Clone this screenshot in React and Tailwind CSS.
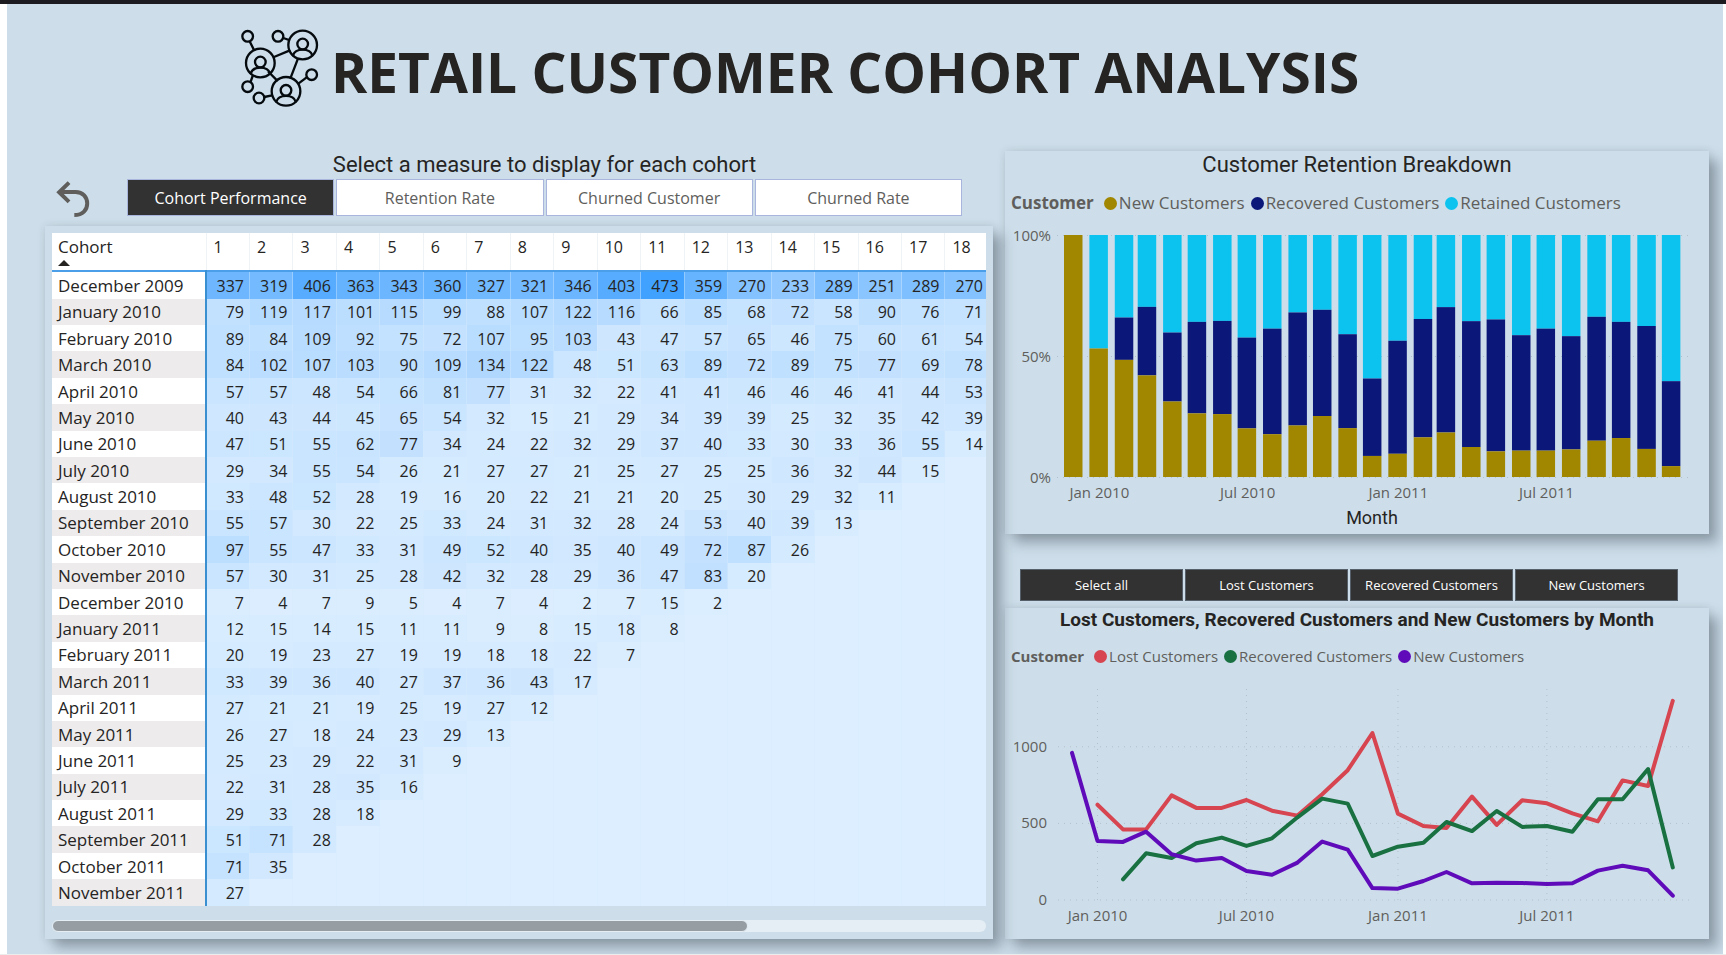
import { useState } from "react";

const COHORTS = [
  ["December 2009", [337, 319, 406, 363, 343, 360, 327, 321, 346, 403, 473, 359, 270, 233, 289, 251, 289, 270]],
  ["January 2010", [79, 119, 117, 101, 115, 99, 88, 107, 122, 116, 66, 85, 68, 72, 58, 90, 76, 71]],
  ["February 2010", [89, 84, 109, 92, 75, 72, 107, 95, 103, 43, 47, 57, 65, 46, 75, 60, 61, 54]],
  ["March 2010", [84, 102, 107, 103, 90, 109, 134, 122, 48, 51, 63, 89, 72, 89, 75, 77, 69, 78]],
  ["April 2010", [57, 57, 48, 54, 66, 81, 77, 31, 32, 22, 41, 41, 46, 46, 46, 41, 44, 53]],
  ["May 2010", [40, 43, 44, 45, 65, 54, 32, 15, 21, 29, 34, 39, 39, 25, 32, 35, 42, 39]],
  ["June 2010", [47, 51, 55, 62, 77, 34, 24, 22, 32, 29, 37, 40, 33, 30, 33, 36, 55, 14]],
  ["July 2010", [29, 34, 55, 54, 26, 21, 27, 27, 21, 25, 27, 25, 25, 36, 32, 44, 15]],
  ["August 2010", [33, 48, 52, 28, 19, 16, 20, 22, 21, 21, 20, 25, 30, 29, 32, 11]],
  ["September 2010", [55, 57, 30, 22, 25, 33, 24, 31, 32, 28, 24, 53, 40, 39, 13]],
  ["October 2010", [97, 55, 47, 33, 31, 49, 52, 40, 35, 40, 49, 72, 87, 26]],
  ["November 2010", [57, 30, 31, 25, 28, 42, 32, 28, 29, 36, 47, 83, 20]],
  ["December 2010", [7, 4, 7, 9, 5, 4, 7, 4, 2, 7, 15, 2]],
  ["January 2011", [12, 15, 14, 15, 11, 11, 9, 8, 15, 18, 8]],
  ["February 2011", [20, 19, 23, 27, 19, 19, 18, 18, 22, 7]],
  ["March 2011", [33, 39, 36, 40, 27, 37, 36, 43, 17]],
  ["April 2011", [27, 21, 21, 19, 25, 19, 27, 12]],
  ["May 2011", [26, 27, 18, 24, 23, 29, 13]],
  ["June 2011", [25, 23, 29, 22, 31, 9]],
  ["July 2011", [22, 31, 28, 35, 16]],
  ["August 2011", [29, 33, 28, 18]],
  ["September 2011", [51, 71, 28]],
  ["October 2011", [71, 35]],
  ["November 2011", [27]],
];

const PERIODS = Array.from({ length: 18 }, (_, i) => i + 1);
const MEASURES = ["Cohort Performance", "Retention Rate", "Churned Customer", "Churned Rate"];
const SERIES_BUTTONS = ["Select all", "Lost Customers", "Recovered Customers", "New Customers"];

// Per month: [top of New, top of Recovered] in percent of all customers.
const BREAKDOWN = [
  [100, 100], [53.1, 53.1], [48.4, 65.9], [42, 70.3], [31.2, 59.7], [26.3, 64.1], [26, 64.5],
  [20.1, 57.6], [17.7, 61.3], [21.3, 68], [25.2, 69.1], [20.2, 59], [8.7, 40.7], [9.6, 56.3],
  [16.4, 65.3], [18.4, 70.2], [12.4, 64.4], [10.6, 65.1], [10.9, 58.6], [10.9, 61.3],
  [11.4, 58.2], [15, 66.2], [16.1, 64.1], [11.6, 62.4], [4.5, 39.6],
];

const LOST = [622, 461, 461, 683, 601, 601, 653, 583, 551, 690, 847, 1090, 564, 483, 470, 675, 490, 651, 631, 566, 514, 781, 744, 1300];
const RECOVERED = [135, 305, 274, 370, 407, 353, 403, 540, 662, 629, 287, 348, 374, 509, 450, 581, 477, 483, 446, 657, 657, 855, 213];
const NEW = [960, 385, 379, 446, 298, 257, 274, 189, 165, 244, 381, 329, 78, 74, 124, 183, 109, 113, 111, 104, 109, 192, 224, 194, 28];

const TICKS = [[1, "Jan 2010"], [7, "Jul 2010"], [13, "Jan 2011"], [19, "Jul 2011"]];

// Days from 1 December 2009 to the first day of the n-th month after it.
const dayOf = (n) => (Date.UTC(2009, 11 + n, 1) - Date.UTC(2009, 11, 1)) / 86400000;

function heat(value) {
  const t = (value || 0) / 473;
  return `rgb(${Math.round(220 - 155 * t)}, ${Math.round(238 - 77 * t)}, 255)`;
}

function NetworkIcon() {
  return (
    <svg viewBox="60 55 240 240" className="size-20 shrink-0" fill="none" stroke="#050a0e" strokeWidth="7" strokeLinecap="round" aria-hidden="true">
      <circle cx="83" cy="80" r="16" />
      <circle cx="174" cy="80" r="16" />
      <circle cx="83" cy="231" r="16" />
      <circle cx="117" cy="265" r="16" />
      <circle cx="275" cy="195" r="16" />
      {[[248, 106], [121, 160], [198, 245]].map(([x, y]) => (
        <g key={x}>
          <circle cx={x} cy={y} r="43" />
          <circle cx={x} cy={y - 3} r="16" />
          <path d={`M${x - 29} ${y + 31} C${x - 22} ${y + 8} ${x + 22} ${y + 8} ${x + 29} ${y + 31}`} />
        </g>
      ))}
      <path d="M90 97 102 121M190 85 207 91M162 142 208 123M233 149 212 204M146 187 171 212M98 199 92 216M133 262 156 257M236 221 260 203" />
    </svg>
  );
}

function UndoIcon() {
  return (
    <svg viewBox="168 120 105 115" className="h-[38px] w-[35px]" fill="none" stroke="#605e5c" strokeWidth="12" aria-hidden="true">
      <path d="M207 128 177 157 207 186M177 156H227C249 156 262 172 262 191S249 226 223 226" />
    </svg>
  );
}

function Legend({ items, className }) {
  return (
    <div className={`flex items-center pl-[6px] text-[#605e5c] ${className}`}>
      <span className="mr-[10px] font-bold">Customer</span>
      <ul className="flex gap-[6px]">
        {items.map(([label, dot]) => (
          <li key={label} className="flex items-center gap-[2px]">
            <span className={`size-[13px] rounded-full ${dot}`} />
            {label}
          </li>
        ))}
      </ul>
    </div>
  );
}

function CohortTable() {
  return (
    <div className="overflow-hidden">
      <table className="h-[673px] w-[calc(100%+3px)] table-fixed border-collapse text-base leading-5 text-[#252423]">
        <thead>
          <tr className="h-[38px] border-b-2 border-[#4a9fe8] bg-white align-top">
            <th scope="col" className="w-[154px] border-r border-[#f0f3f5] pt-1 pl-[6px] text-left text-[17px] font-normal">
              Cohort
              <span className="mt-[3px] block h-0 w-0 border-x-[6px] border-b-[6px] border-x-transparent border-b-[#252423]" />
            </th>
            {PERIODS.map((p) => (
              <th key={p} scope="col" className="border-r border-[#f0f3f5] pt-1 pl-[7px] text-left font-normal">
                {p}
              </th>
            ))}
          </tr>
        </thead>
        <tbody>
          {COHORTS.map(([name, values]) => (
            <tr key={name} className="group">
              <th scope="row" className="border-r-2 border-[#3a8fd0] bg-white pt-px pl-[6px] text-left text-[17px] font-normal whitespace-nowrap group-even:bg-[#edebec]">
                {name}
              </th>
              {PERIODS.map((p, i) => (
                <td key={p} className="border-r border-[#d7eafc]/40 pt-px pr-[5px] text-right" style={{ backgroundColor: heat(values[i]) }}>
                  {values[i]}
                </td>
              ))}
            </tr>
          ))}
        </tbody>
      </table>
    </div>
  );
}

function RetentionChart() {
  const x = (n) => 59 + dayOf(n) * 0.819;
  const y = (pct) => 252 - pct * 2.42;
  return (
    <svg viewBox="0 0 704 309" className="block w-full font-['Open_Sans',sans-serif]" role="img" aria-label="Customer Retention Breakdown">
      <g stroke="#b3c1cc" strokeDasharray="1 5">
        <path d="M52 10.5H684M52 131.5H684M52 252.5H684" />
      </g>
      {BREAKDOWN.map(([a, b], n) => (
        <g key={n}>
          {b < 100 && <rect x={x(n)} y={y(100)} width="18.5" height={y(b) - y(100)} fill="#0cc3ef" />}
          {a < b && <rect x={x(n)} y={y(b)} width="18.5" height={y(a) - y(b)} fill="#0c1879" />}
          <rect x={x(n)} y={y(a)} width="18.5" height={y(0) - y(a)} fill="#a18600" />
        </g>
      ))}
      <g fill="#605e5c" fontSize="15">
        <g textAnchor="end">
          <text x="46" y="16">100%</text>
          <text x="46" y="137">50%</text>
          <text x="46" y="258">0%</text>
        </g>
        <g textAnchor="middle">
          {TICKS.map(([n, label]) => (
            <text key={label} x={x(n) + 10} y="273">{label}</text>
          ))}
        </g>
      </g>
      <text x="367" y="299" textAnchor="middle" fontSize="18" fill="#252423" className="font-['Roboto',sans-serif]">Month</text>
    </svg>
  );
}

function TrendChart() {
  const x = (n) => 67 + dayOf(n) * 0.823;
  const y = (v) => 227 - v * 0.1532;
  const line = (values, start) => values.map((v, i) => `${x(i + start).toFixed(1)},${y(v).toFixed(1)}`).join(" ");
  return (
    <svg viewBox="0 0 704 266" className="block w-full font-['Open_Sans',sans-serif]" role="img" aria-label="Lost, recovered and new customers by month">
      <g stroke="#b3c1cc" strokeDasharray="1 5">
        {[0, 500, 1000].map((v) => (
          <path key={v} d={`M53 ${y(v)}H684`} />
        ))}
        {TICKS.map(([n]) => (
          <path key={n} d={`M${x(n)} 16V227`} />
        ))}
      </g>
      <g fill="none" strokeWidth="4" strokeLinejoin="round" strokeLinecap="round">
        <polyline points={line(LOST, 1)} stroke="#d64550" />
        <polyline points={line(RECOVERED, 2)} stroke="#197142" />
        <polyline points={line(NEW, 0)} stroke="#5f0bba" />
      </g>
      <g fill="#605e5c" fontSize="15">
        <g textAnchor="end">
          {[0, 500, 1000].map((v) => (
            <text key={v} x="42" y={y(v) + 5}>{v}</text>
          ))}
        </g>
        <g textAnchor="middle">
          {TICKS.map(([n, label]) => (
            <text key={label} x={x(n)} y="248">{label}</text>
          ))}
        </g>
      </g>
    </svg>
  );
}

export default function App() {
  const [measure, setMeasure] = useState(MEASURES[0]);
  const panel = "bg-[#cddeea] shadow-[9px_9px_12px_rgba(40,50,60,0.36),0_0_8px_rgba(40,50,60,0.12)]";
  return (
    <div className="border-t-4 border-b-2 border-t-[#1c1c20] border-b-[#ececec] bg-white font-['Open_Sans',sans-serif]">
      <main className="mr-[3px] ml-[7px] overflow-hidden bg-[#cddeea] pr-[14px] pb-[15px] pl-[38px]">
        <header className="flex h-[147px] items-start gap-[11px] pt-6 pl-[195px]">
          <NetworkIcon />
          <h1 className="text-[55px] leading-[88px] font-bold whitespace-nowrap text-[#252423]">RETAIL CUSTOMER COHORT ANALYSIS</h1>
        </header>

        <div className="grid grid-cols-[948fr_704fr] gap-3">
          <section className="flex min-w-0 flex-col">
            <div className="mb-[10px] grid grid-cols-[82px_1fr] pr-[31px]">
              <h2 className="col-start-2 text-center font-['Roboto',sans-serif] text-[22px] leading-7 text-[#252423]">
                Select a measure to display for each cohort
              </h2>
              <button type="button" aria-label="Back" className="flex h-[37px] items-center pt-[2px] pl-[11px]">
                <UndoIcon />
              </button>
              <div className="grid grid-cols-4 gap-[2px]">
                {MEASURES.map((m) => (
                  <button
                    key={m}
                    type="button"
                    aria-pressed={m === measure}
                    onClick={() => setMeasure(m)}
                    className="h-[37px] border border-[#a9b5dd] bg-white pt-px text-base text-[#605e5c] aria-pressed:bg-[#323232] aria-pressed:text-white"
                  >
                    {m}
                  </button>
                ))}
              </div>
            </div>

            <div className={`relative z-10 flex-1 p-[7px] ${panel}`}>
              <CohortTable />
              <div className="mt-[14px] h-3 rounded-full bg-[#e5eef5]">
                <div className="h-3 w-[74.5%] rounded-full border border-[#e5eef5] bg-[#969ea4]" />
              </div>
            </div>
          </section>

          <div className="flex min-w-0 flex-col">
            <section className={panel}>
              <h2 className="text-center font-['Roboto',sans-serif] text-[22px] leading-7 text-[#252423]">Customer Retention Breakdown</h2>
              <Legend
                className="mt-3 mb-[10px] text-[17px] leading-6"
                items={[
                  ["New Customers", "bg-[#a18600]"],
                  ["Recovered Customers", "bg-[#0c1879]"],
                  ["Retained Customers", "bg-[#0cc3ef]"],
                ]}
              />
              <RetentionChart />
            </section>

            <div className="mt-[35px] mb-[7px] grid grid-cols-4 gap-[2px] pr-[31px] pl-[15px]">
              {SERIES_BUTTONS.map((label) => (
                <button key={label} type="button" className="h-8 border border-[#55606a] bg-[#323232] pt-px text-[13px] whitespace-nowrap text-white">
                  {label}
                </button>
              ))}
            </div>

            <section className={panel}>
              <h2 className="text-center font-['Roboto',sans-serif] text-[19px] leading-6 font-bold text-[#252423]">
                Lost Customers, Recovered Customers and New Customers by Month
              </h2>
              <Legend
                className="mt-3 mb-[5px] text-[15px] leading-6"
                items={[
                  ["Lost Customers", "bg-[#d64550]"],
                  ["Recovered Customers", "bg-[#197142]"],
                  ["New Customers", "bg-[#5f0bba]"],
                ]}
              />
              <TrendChart />
            </section>
          </div>
        </div>
      </main>
    </div>
  );
}
